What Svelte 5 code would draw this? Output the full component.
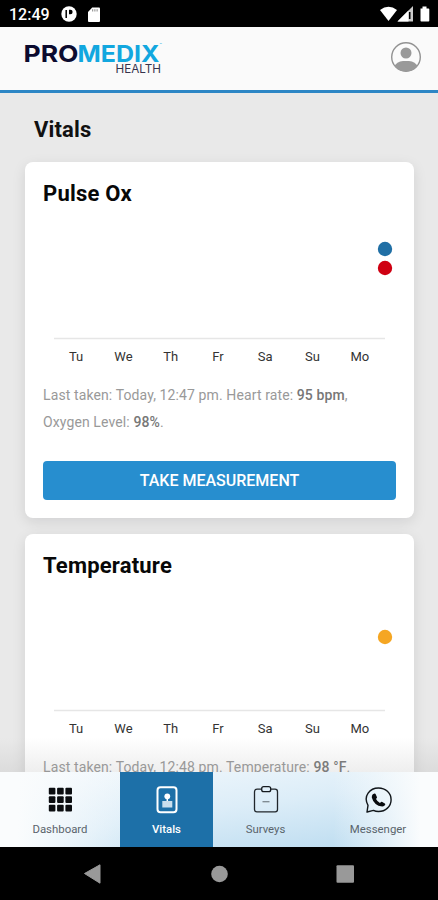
<script lang="ts">
    const days = ["Tu", "We", "Th", "Fr", "Sa", "Su", "Mo"];

    const cards = [
        {
            title: "Pulse Ox",
            points: [
                { y: 35, color: "#206fa5" },
                { y: 54, color: "#cf0012" },
            ],
            note: [
                { text: "Last taken: Today, 12:47 pm. Heart rate: " },
                { text: "95 bpm", strong: true },
                { text: ", Oxygen Level: " },
                { text: "98%", strong: true },
                { text: "." },
            ],
        },
        {
            title: "Temperature",
            points: [{ y: 51, color: "#f5a623" }],
            note: [
                { text: "Last taken: Today, 12:48 pm. Temperature: " },
                { text: "98 °F", strong: true },
                { text: "." },
            ],
        },
    ];

    const tabs = ["Dashboard", "Vitals", "Surveys", "Messenger"];
    let active = $state("Vitals");
</script>

<div class="phone">
    <div class="status">
        <span class="time">12:49</span>
        <svg class="app" width="16" height="16" viewBox="0 0 16 16">
            <circle cx="8" cy="8" r="7.7" fill="#fff" />
            <path d="M5.200 4v8" stroke="#000" stroke-width="1.500" />
            <path d="M8 3.800h1.400a2.200 2.200 0 0 1 0 4.400H8z" fill="#000" />
        </svg>
        <svg class="sd" width="12" height="15" viewBox="0 0 12 15">
            <path d="M4.2.5H11q1 0 1 1V14q0 1-1 1H1q-1 0-1-1V5z" fill="#fff" />
            <path d="M4.7 2.2v2.3M6.9 2.2v2.3M9.1 2.2v2.3" stroke="#777" stroke-width=".9" />
        </svg>
        <svg class="signal" width="50" height="16" viewBox="0 0 50 16">
            <path d="M0 4Q8.5-2.6 17 4L8.500 15z" fill="#fff" />
            <path d="M33 0v15.500H17.500z" fill="#ccc" />
            <path d="M28.500 4.500v11H17.500z" fill="#fff" />
            <path d="M29.700 6v7" stroke="#000" stroke-width="1.600" />
            <path d="M40.500 2.500h2V.500h4v2h2q.8 0 .8.800v11.400q0 .8-.8.800h-7.200q-.8 0-.8-.8z" fill="#fff" />
        </svg>
    </div>

    <header>
        <svg class="logo" width="142" height="34" viewBox="0 0 142 34">
            <text class="word pro" x="-.5" y="20.500" textLength="55" lengthAdjust="spacingAndGlyphs">PRO</text>
            <text class="word medix" x="53.500" y="20.500" textLength="82" lengthAdjust="spacingAndGlyphs">MEDIX</text>
            <text class="tm" x="135.500" y="20">™</text>
            <text class="health" x="91.500" y="31.500" textLength="45.500" lengthAdjust="spacingAndGlyphs">HEALTH</text>
        </svg>
        <svg class="user" width="32" height="32" viewBox="0 0 32 32">
            <clipPath id="face"><circle cx="16" cy="16" r="14.500" /></clipPath>
            <circle cx="16" cy="16" r="14.300" fill="#fbfbfb" stroke="#929292" stroke-width="1.400" />
            <circle cx="16" cy="12" r="5.500" fill="#999" />
            <path d="M3 27Q7 20 13 20h6q6 0 10 7v5H3z" fill="#999" clip-path="url(#face)" />
        </svg>
    </header>

    <main>
        <h1>Vitals</h1>
        {#each cards as card}
            <section>
                <h2>{card.title}</h2>
                <svg class="chart" width="353" height="126" viewBox="0 0 353 126">
                    <path d="M11 124.500h331" stroke="#e6e6e6" stroke-width="1.600" />
                    {#each card.points as point}
                        <circle cx="342" cy={point.y} r="7.200" fill={point.color} />
                    {/each}
                </svg>
                <div class="days">
                    {#each days as day}
                        <span>{day}</span>
                    {/each}
                </div>
                <p>{#each card.note as part}{#if part.strong}<b>{part.text}</b>{:else}{part.text}{/if}{/each}</p>
                <button>TAKE MEASUREMENT</button>
            </section>
        {/each}
        <div class="fade"></div>
    </main>

    <nav>
        {#each tabs as tab}
            <a class={tab.toLowerCase()} class:active={active === tab} href="#{tab}" onclick={() => (active = tab)}>
                <svg width="30" height="30" viewBox="0 0 30 30">
                    {#if tab === "Dashboard"}
                        {#each [2.8, 11.3, 19.8] as y}
                            {#each [3.8, 12.1, 20.4] as x}
                                <rect {x} {y} width="6.600" height="6.600" rx="1" fill="#0b0d10" />
                            {/each}
                        {/each}
                    {:else if tab === "Vitals"}
                        <rect x="5.500" y="2.200" width="19" height="25" rx="3" fill="none" stroke="#fff" stroke-width="2" />
                        <circle cx="15.300" cy="11.300" r="2.900" fill="#fff" />
                        <path d="M15.300 13v4" stroke="#fff" stroke-width="1.500" />
                        <path d="M10.300 16h10v6.500h-10z" fill="#c9dfee" />
                    {:else if tab === "Surveys"}
                        <path d="M10.500 4.200H6Q3.500 4.200 3.500 6.700v17.800q0 2.300 2.300 2.300h18.400q2.300 0 2.300-2.300V6.700q0-2.500-2.500-2.500h-4" fill="none" stroke="#20262b" stroke-width="1.300" />
                        <rect x="10.700" y="1.700" width="9" height="5" rx="2" fill="none" stroke="#151a1f" stroke-width="1.300" />
                        <path d="M11.500 16.700h7" stroke="#7b868e" stroke-width="1.300" />
                    {:else}
                        <path d="M4 27l1-6.700C-.2 11 7 3 15.500 3c7 0 12.600 5 12.600 11.700S22.500 26.500 15.500 26.500c-2 0-3.600-.4-5-1.100z" fill="none" stroke="#11161a" stroke-width="1.400" stroke-linejoin="round" />
                        <path d="M9.800 9.300l1.700-.7q.8-.2 1.200.6l1.200 2.700q.3.800-.3 1.300l-.6.900q1.200 2.500 4 3.900l1-.9q.6-.5 1.300-.1l2.500 1.400q.7.500.4 1.300-.9 1.800-3 1.700-8.200-.8-10.400-9-.2-1.800 1-3.100z" fill="#080b0e" />
                    {/if}
                </svg>
                <span>{tab}</span>
            </a>
        {/each}
    </nav>

    <div class="system">
        <svg width="438" height="52" viewBox="0 0 438 52">
            <path d="M84.500 26.500L100 17.800v18.400z" fill="#999" stroke="#999" stroke-linejoin="round" />
            <circle cx="219.500" cy="27" r="8.300" fill="#999" />
            <rect x="336.500" y="18.300" width="17.500" height="17.500" rx="1" fill="#999" />
        </svg>
    </div>
</div>

<style>
    :global(body) {
        background: #000;
    }

    .phone {
        display: flex;
        flex-direction: column;
        width: 438px;
        height: 900px;
        overflow: hidden;
        font-family: Roboto, "Liberation Sans", sans-serif;
        background: #e9e9e9;
    }

    .status {
        flex: none;
        box-sizing: border-box;
        display: flex;
        align-items: center;
        height: 27px;
        padding: 1px 8px 0 9px;
        background: #000;
        color: #fff;
    }

    .time {
        width: 52px;
        font-size: 16px;
        font-weight: 500;
    }

    .sd {
        margin-left: 11px;
    }

    .signal {
        margin-left: auto;
    }

    header {
        flex: none;
        box-sizing: border-box;
        display: flex;
        justify-content: space-between;
        align-items: flex-start;
        height: 66px;
        padding: 14px 16px 0 24px;
        background: #fafafa;
        border-bottom: 3px solid #2d86c5;
    }

    .logo {
        overflow: visible;
    }

    .word {
        font: 700 23.5px Inter, sans-serif;
    }

    .pro {
        fill: #0c0b2f;
    }

    .medix {
        fill: #12a7df;
    }

    .tm {
        font-size: 4px;
        fill: #12a7df;
        transform: translateY(-15px);
    }

    .health {
        font: 400 11.5px Inter, sans-serif;
        fill: #35334c;
    }

    main {
        position: relative;
        flex: 1;
        min-height: 0;
        overflow: hidden;
        padding: 0 24px 0 25px;
    }

    h1 {
        margin: 0 0 0 9px;
        height: 69px;
        font-size: 22px;
        line-height: 73px;
        letter-spacing: 0.15px;
        color: #111;
    }

    section {
        box-sizing: border-box;
        height: 356px;
        margin-bottom: 16px;
        padding: 16px 18px 18px;
        border-radius: 8px;
        background: #fff;
        box-shadow: 0 4px 14px rgba(0, 0, 20, 0.1);
    }

    h2 {
        margin: 0;
        height: 36px;
        font-size: 22px;
        line-height: 31px;
        letter-spacing: 0.2px;
        color: #080808;
    }

    .chart {
        display: block;
    }

    .days {
        display: flex;
        height: 42px;
        margin: 0 12.5px 0 9.5px;
        font-size: 13px;
        line-height: 34px;
        color: #333;
    }

    .days span {
        flex: 1;
        text-align: center;
    }

    p {
        margin: 0;
        height: 79px;
        font-size: 14px;
        line-height: 27px;
        letter-spacing: 0.11px;
        color: #999;
    }

    b {
        font-weight: 500;
        color: #777;
    }

    button {
        display: block;
        width: 353px;
        height: 39px;
        padding: 0;
        border: 0;
        border-radius: 4px;
        background: #278ecf;
        color: #fff;
        font: 500 16px Roboto, sans-serif;
    }

    .fade {
        position: absolute;
        left: 0;
        right: 0;
        bottom: 0;
        height: 34px;
        background: linear-gradient(rgba(150, 150, 150, 0), rgba(150, 150, 150, 0.16));
    }

    nav {
        flex: none;
        display: flex;
        height: 75px;
        background:
            linear-gradient(90deg, #fafcfd 4%, rgba(250, 252, 253, 0) 32%, rgba(250, 252, 253, 0) 76%, #fafcfd 96%),
            linear-gradient(172deg, #f2f8fc 5%, #dcedf8 50%, #bcdcf0 95%);
    }

    nav a {
        display: flex;
        flex-direction: column;
        align-items: center;
        box-sizing: border-box;
        padding-top: 13px;
        color: #5a646c;
        font-size: 11.4px;
        text-decoration: none;
    }

    nav span {
        margin-top: 7px;
        line-height: 15px;
    }

    .dashboard {
        width: 120px;
    }

    .vitals {
        width: 93px;
    }

    .surveys {
        width: 105px;
    }

    .messenger {
        width: 120px;
    }

    .active {
        background: #1d70a8;
        color: #fff;
        font-weight: 500;
    }

    .system {
        flex: none;
        height: 53px;
        background: #000;
    }
</style>
